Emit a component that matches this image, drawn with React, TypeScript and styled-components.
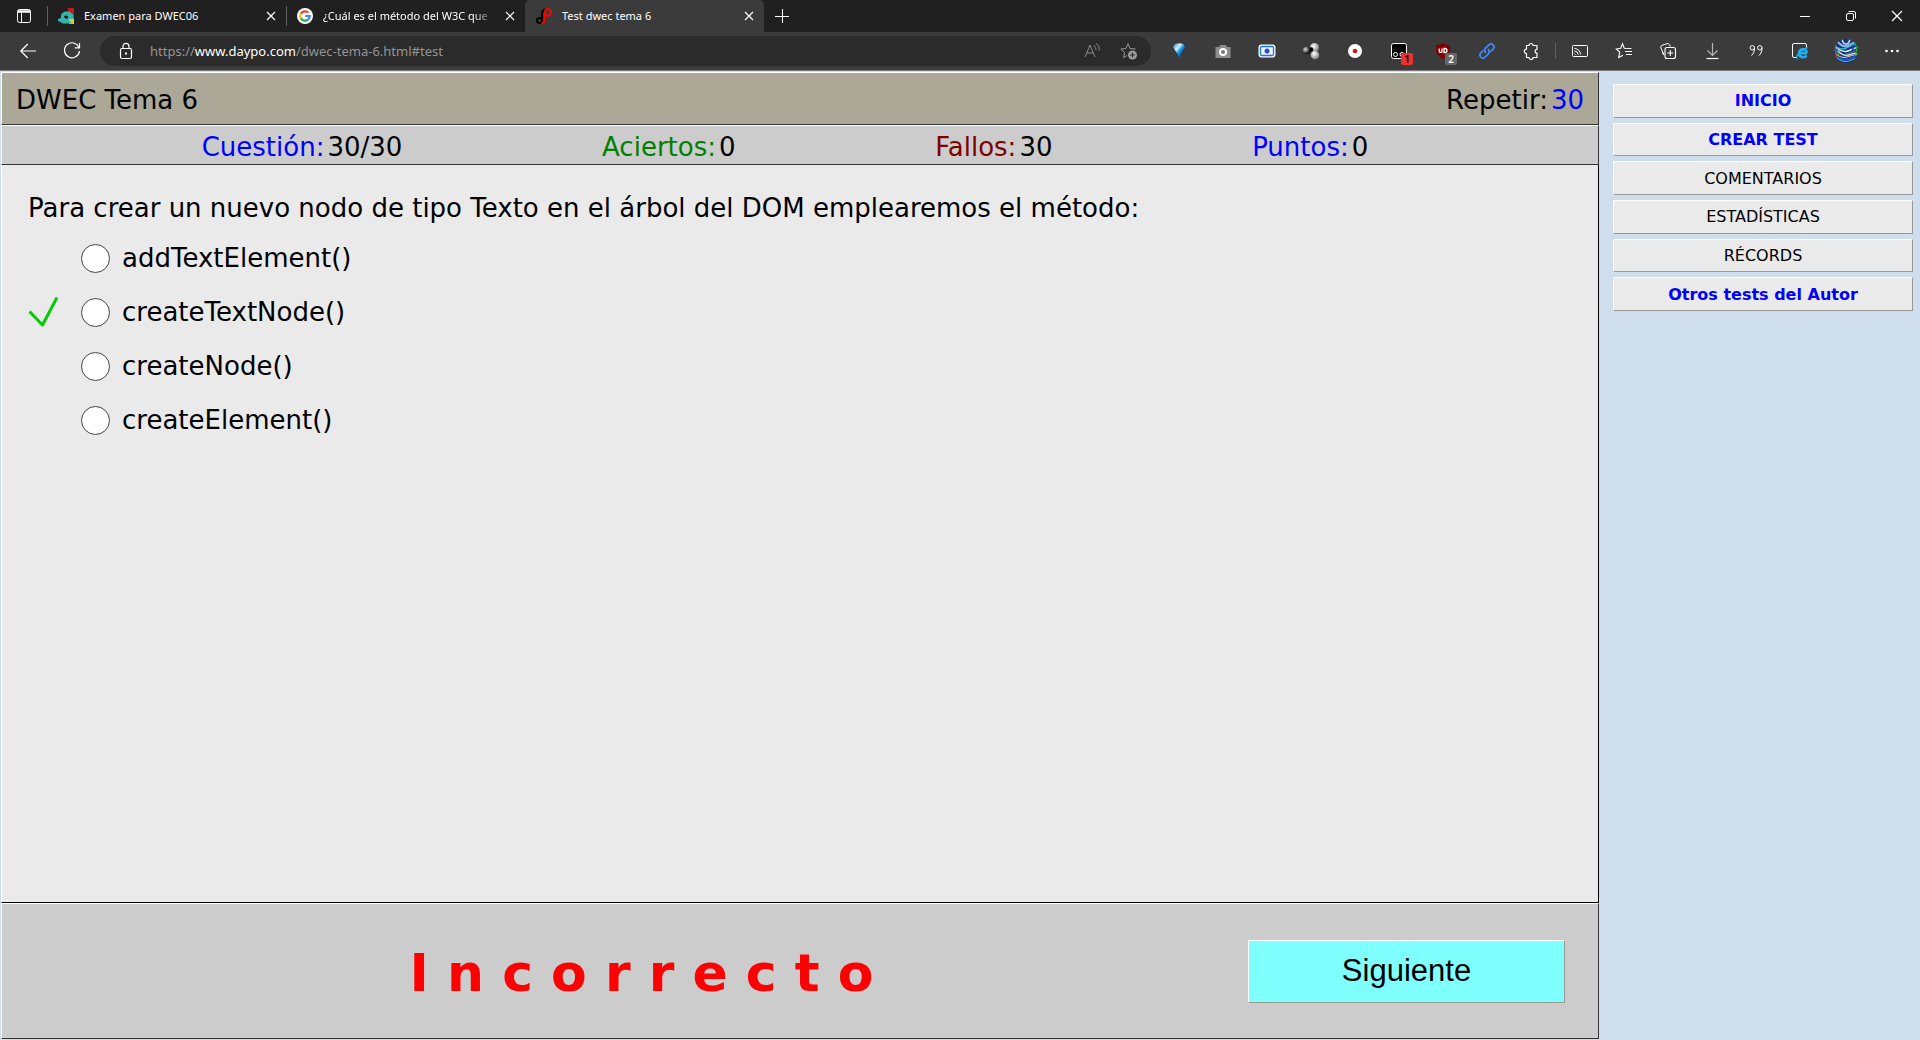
import React, { useState } from "react";
import styled, { createGlobalStyle, css } from "styled-components";

const GlobalStyle = createGlobalStyle`
  * { box-sizing: border-box; }
  body {
    margin: 0;
    background: #cfdeed;
    font-family: Verdana, "DejaVu Sans", sans-serif;
    color: #000;
  }
  button { font: inherit; color: inherit; cursor: pointer; }
`;

const uiFont = `"Segoe UI", "Noto Sans", sans-serif`;

const Shell = styled.div`
  display: flex;
  flex-direction: column;
  min-height: 100vh;
`;

/* ---------- Browser frame ---------- */

const TabStrip = styled.div`
  display: flex;
  align-items: stretch;
  height: 32px;
  background: #202020;
  color: #fff;
  font-family: ${uiFont};
  font-size: 11px;
`;

const PlainButton = styled.button<{ $width: number }>`
  display: flex;
  align-items: center;
  justify-content: center;
  flex: none;
  width: ${(p) => p.$width}px;
  padding: 0;
  border: 0;
  background: none;
  svg { display: block; overflow: visible; }
`;

const BrowserTab = styled.div<{ $active?: boolean }>`
  display: flex;
  align-items: center;
  width: 239px;
  padding-right: 7px;
  ${(p) =>
    p.$active &&
    css`
      background: #3b3b3b;
      border-radius: 5px 5px 0 0;
    `}
  &::before {
    content: "";
    width: 1px;
    height: 20px;
    margin-right: 10px;
    background: ${(p) => (p.$active ? "transparent" : "#606060")};
  }
`;

const TabTitle = styled.button<{ $fade?: boolean }>`
  flex: 1;
  min-width: 0;
  margin: 0 8px 0 10px;
  padding: 0;
  border: 0;
  background: none;
  text-align: left;
  white-space: nowrap;
  overflow: hidden;
  line-height: 18px;
  ${(p) => p.$fade && css`mask-image: linear-gradient(90deg, #000 88%, transparent);`}
`;

const Spacer = styled.div`
  flex: 1;
`;

const Toolbar = styled.div`
  display: flex;
  align-items: stretch;
  height: 39px;
  padding: 0 6px;
  background: #3b3b3b;
  border-bottom: 1px solid #77777c;
  color: #fff;
  font-family: ${uiFont};
`;

const AddressBar = styled.div`
  display: flex;
  align-items: center;
  flex: 1;
  min-width: 0;
  height: 30px;
  margin: 4px 6px;
  padding: 0 5px 0 8px;
  border-radius: 15px;
  background: #2b2b2b;
`;

const Url = styled.div`
  flex: 1;
  min-width: 0;
  margin-left: 6px;
  overflow: hidden;
  white-space: nowrap;
  outline: none;
  font-size: 13px;
  line-height: 20px;
  color: #959595;
  b { font-weight: 400; color: #fff; }
`;

const ToolbarDivider = styled.div`
  align-self: center;
  width: 1px;
  height: 16px;
  margin: 0 2px;
  background: #606060;
`;

const BadgeHost = styled.span`
  position: relative;
  display: block;
`;

const Badge = styled.span<{ $bg: string; $fg: string }>`
  position: absolute;
  left: 10px;
  top: 10px;
  width: 12px;
  height: 12px;
  border-radius: 2px;
  background: ${(p) => p.$bg};
  color: ${(p) => p.$fg};
  font-size: 10px;
  font-weight: 600;
  line-height: 12px;
  text-align: center;
`;

/* ---------- Test page ---------- */

const Page = styled.div`
  display: flex;
  flex: 1;
`;

const TestPane = styled.main`
  display: flex;
  flex-direction: column;
  flex: 1;
  min-width: 0;
  padding: 1px 0 1px 1px;
`;

const Panel = styled.section<{ $bg: string; $edge?: string }>`
  display: flex;
  border: 1px solid #fff;
  border-right-color: ${(p) => p.$edge ?? "#333"};
  border-bottom-color: ${(p) => p.$edge ?? "#333"};
  background: ${(p) => p.$bg};
  font-size: 26px;
  line-height: 30px;
`;

const TitlePanel = styled(Panel)`
  align-items: center;
  justify-content: space-between;
  height: 53px;
  padding: 2px 14px 0;
`;

const Title = styled.h1`
  margin: 0;
  font-size: inherit;
  font-weight: 400;
`;

const StatsPanel = styled(Panel)`
  align-items: center;
  justify-content: space-evenly;
  height: 40px;
  padding: 4px 30px 0 0;
`;

const Stat = styled.span`
  display: flex;
  gap: 3px;
`;

const Tone = styled.span<{ $color: string }>`
  color: ${(p) => p.$color};
`;

const QuestionPanel = styled(Panel)`
  flex: 1;
  flex-direction: column;
  border-top: 0;
  padding: 28px 26px;
`;

const Question = styled.p`
  margin: 0 0 8px;
`;

const Answer = styled.label`
  display: flex;
  align-items: center;
  height: 54px;
`;

const MarkSlot = styled.span`
  width: 53px;
  height: 30px;
  svg { display: block; }
`;

const Radio = styled.input`
  appearance: none;
  width: 29px;
  height: 29px;
  margin: 0 12px 0 0;
  border: 1px solid #444;
  border-radius: 50%;
  background: #fff;
  &:checked { box-shadow: inset 0 0 0 5px #fff; background: #0075ff; }
`;

const ResultPanel = styled(Panel)`
  align-items: center;
  height: 136px;
  padding: 0 33px;
`;

const Verdict = styled.strong`
  flex: 1;
  padding-top: 4px;
  text-align: center;
  font-size: 52px;
  line-height: 60px;
  color: #f00;
`;

const NextButton = styled.button`
  width: 317px;
  height: 63px;
  border: 1px solid #fff;
  border-right-color: #999;
  border-bottom-color: #999;
  background: #80ffff;
  font-family: Arial, "Liberation Sans", sans-serif;
  font-size: 31px;
`;

const Sidebar = styled.nav`
  flex: none;
  display: grid;
  grid-auto-rows: 1fr;
  align-self: flex-start;
  gap: 5px;
  width: 321px;
  height: 240px;
  padding: 13px 7px 0 14px;
`;

const SideLink = styled.a<{ $strong?: boolean }>`
  display: flex;
  align-items: center;
  justify-content: center;
  border: 1px solid #fff;
  border-right-color: #999;
  border-bottom-color: #999;
  padding-top: 1px;
  background: #eaeaea;
  font-size: 16px;
  line-height: 20px;
  text-decoration: none;
  font-weight: ${(p) => (p.$strong ? 700 : 400)};
  color: ${(p) => (p.$strong ? "#00f" : "#000")};
`;

/* ---------- Icons ---------- */

type IconProps = { size?: number; color?: string; children: React.ReactNode };
const Icon = ({ size = 16, color = "#fff", children }: IconProps) => (
  <svg width={size} height={size} viewBox={`0 0 ${size} ${size}`} fill="none" stroke={color} strokeWidth="1" aria-hidden="true">
    {children}
  </svg>
);

const TabsMenuIcon = () => (
  <Icon>
    <rect x="1.5" y="1.5" width="13" height="13" rx="2" />
    <path d="M2 3h12M2 4h12" strokeWidth="1.4" />
    <path d="M5.5 4v10" />
  </Icon>
);
const CloseIcon = ({ size = 8 }: { size?: number }) => (
  <Icon size={size}><path d={`M0 0L${size} ${size}M${size} 0L0 ${size}`} strokeWidth="1.2" /></Icon>
);
const PlusIcon = () => <Icon size={14}><path d="M7.5 0v14M0 7.5h14" strokeWidth="1.1" /></Icon>;
const MoodleIcon = () => (
  <Icon>
    <path d="M10 0h6v7h-4l-2-2z" fill="#c4161c" stroke="none" />
    <path d="M11 10h5v6h-5z" fill="#f5c21b" stroke="none" />
    <path d="M8 3.500h3.500L15.500 7v4H11v1.500L13 14v1.500H5L2.500 14 0 13v-2l3-1V7c1-2 3-3.500 5-3.500z" fill="#33b5ab" stroke="none" />
    <path d="M6 8.500C7 7 9 7 10 8.500v2H7z" fill="#202020" stroke="none" />
  </Icon>
);
const GoogleIcon = () => (
  <Icon>
    <circle cx="8" cy="8" r="8" fill="#fff" stroke="none" />
    <g strokeWidth="2.2">
      <path d="M11.400 4.700A4.800 4.800 0 0 0 3.900 5.600" stroke="#ea4335" />
      <path d="M3.900 5.600a4.800 4.800 0 0 0 0 4.800" stroke="#fbbc05" />
      <path d="M3.900 10.400a4.800 4.800 0 0 0 7.400 1" stroke="#34a853" />
      <path d="M11.300 11.400A4.800 4.800 0 0 0 12.800 8H8.200" stroke="#4285f4" />
    </g>
  </Icon>
);
const DaypoIcon = () => (
  <Icon>
    <circle cx="3.500" cy="12.500" r="2.600" stroke="#000" strokeWidth="2" />
    <path d="M6.200 15V5.500C6.200 3 7 2 9 1.500" stroke="#000" strokeWidth="2" />
    <path d="M5.500 15.300C8 15 8.500 13.500 8.500 11V5" stroke="#f00" strokeWidth="2" />
    <ellipse cx="11.800" cy="4.500" rx="3.200" ry="3.400" stroke="#f00" strokeWidth="2" />
  </Icon>
);
const BackIcon = () => <Icon><path d="M16 8H.8M7.800 1L.8 8l7 7" strokeWidth="1.200" /></Icon>;
const ReloadIcon = () => (
  <Icon><path d="M15 4.500A7.500 7.500 0 1 0 15.500 8M15.500 0v4.800h-4.800" strokeWidth="1.200" /></Icon>
);
const LockIcon = () => (
  <Icon>
    <rect x="2.500" y="5.500" width="11" height="10" rx="1.500" strokeWidth="1.200" />
    <path d="M5 5.500V3.300a3 3 0 0 1 6 0v2.200" strokeWidth="1.200" />
    <rect x="7" y="9.500" width="2" height="2" fill="#fff" stroke="none" />
  </Icon>
);
const ReadAloudIcon = () => (
  <Icon color="#8c8c8c">
    <path d="M1 14L6 2l5 12M3 10h6M10 2.500c1.500 1 2 2.500 1.800 4.500M12 .5c2.500 1.500 3.500 4 3 7" />
  </Icon>
);
const StarPath = "M8 .8l2.100 4.700 5.100.5-3.800 3.500 1.100 5L8 12l-4.500 2.500 1.100-5L.8 6l5.100-.5z";
const AddFavoriteIcon = () => (
  <Icon color="#9a9a9a">
    <path d={StarPath} />
    <circle cx="12.500" cy="12" r="5.500" fill="#2b2b2b" stroke="none" />
    <circle cx="12.500" cy="12" r="4.500" fill="#9a9a9a" stroke="none" />
    <path d="M12.500 9.500v5M10 12h5" stroke="#2b2b2b" />
  </Icon>
);
const GemIcon = () => (
  <Icon>
    <defs>
      <linearGradient id="gem" x1="0" y1="0" x2="1" y2="1">
        <stop offset="0" stopColor="#0b6ec0" /><stop offset=".35" stopColor="#d8f4ff" />
        <stop offset=".55" stopColor="#0c8ee8" /><stop offset="1" stopColor="#063a78" />
      </linearGradient>
    </defs>
    <path d="M4 1c3-1 6-1 8 0l2 3-4.500 7L8 15l-1.500-4L2 4z" fill="url(#gem)" stroke="none" />
  </Icon>
);
const CameraIcon = () => (
  <Icon>
    <path d="M5 2h6l1 2h3.500v11H.5V4H4z" fill="#8d8d8d" stroke="none" />
    <circle cx="8" cy="9" r="3" stroke="#fff" strokeWidth="2" fill="#777" />
  </Icon>
);
const ScreenshotIcon = () => (
  <Icon>
    <rect x="0" y="2" width="16" height="12" rx="2" fill="#eef6ff" stroke="#fff" />
    <rect x="1.500" y="3.500" width="13" height="9" rx="1.500" stroke="#1976e8" strokeWidth="1.300" />
    <circle cx="8" cy="8" r="2.500" fill="#3348c8" stroke="none" />
  </Icon>
);
const MoleculeIcon = () => (
  <Icon>
    <defs>
      <radialGradient id="ballA" cx=".35" cy=".35" r=".6"><stop offset="0" stopColor="#ddd" /><stop offset="1" stopColor="#111" /></radialGradient>
      <radialGradient id="ballB" cx=".4" cy=".35" r=".7"><stop offset="0" stopColor="#fff" /><stop offset="1" stopColor="#777" /></radialGradient>
    </defs>
    <g stroke="none">
      <circle cx="11.500" cy="4.500" r="4.500" fill="url(#ballB)" />
      <circle cx="12" cy="12" r="4.300" fill="url(#ballB)" />
      <circle cx="8" cy="6.500" r="2.200" fill="#000" />
      <circle cx="3.500" cy="7.500" r="3.800" fill="url(#ballA)" />
    </g>
  </Icon>
);
const RecordIcon = () => (
  <Icon><circle cx="8" cy="8" r="7" fill="#fff" stroke="none" /><circle cx="8" cy="8" r="2.300" fill="#e01010" stroke="none" /></Icon>
);
const MonkeyIcon = () => (
  <Icon>
    <rect x=".5" y=".5" width="15" height="15" rx="2" fill="#000" />
    <circle cx="4.500" cy="11.500" r="2" /><circle cx="11" cy="11.500" r="2" />
  </Icon>
);
const ShieldIcon = () => (
  <Icon>
    <path d="M8 0c2 1.500 4.500 2 7 2 0 6 .5 10-7 14C.5 12 1 8 1 2c2.500 0 5-.5 7-2z" fill="#800000" stroke="none" />
    <path d="M4.200 5.500v2.700c0 1.600 2.800 1.600 2.800 0V5.500" strokeWidth="1.300" />
    <path d="M9 5.500v4h1a2 2 0 0 0 0-4z" strokeWidth="1.300" />
  </Icon>
);
const LinkIcon = () => (
  <Icon color="#4285f4">
    <g strokeWidth="1.800" strokeLinecap="round">
      <path d="M6.600 9.400a3 3 0 0 1 0-4.200l3.300-3.300a2.970 2.970 0 0 1 4.200 4.200l-2 2" />
      <path d="M9.400 6.600a3 3 0 0 1 0 4.200l-3.300 3.300a2.970 2.970 0 0 1-4.200-4.200l2-2" />
    </g>
  </Icon>
);
const PuzzleIcon = () => (
  <Icon>
    <path d="M3.500 2.500H6a2 2 0 0 1 4 0h4v3.800a1.900 1.900 0 0 0 0 3.800v4.400h-4a2 2 0 0 1-4 0H3.500V10.500a2.200 2.200 0 1 1 0-4.400z" strokeWidth="1.200" strokeLinejoin="round" />
  </Icon>
);
const CastIcon = () => (
  <Icon>
    <rect x=".5" y="2.500" width="15" height="11" rx="1" />
    <path d="M2.500 5.500a6 6 0 0 1 6 6M2.500 8a3.500 3.500 0 0 1 3.500 3.500M2.500 10.500l1 1" />
  </Icon>
);
const FavoritesIcon = () => (
  <Icon>
    <path d="M10.500 5.500L8.300 5.300 6.500.8 4.700 5.300.3 6l3.400 3.200-1 5.300 4.300-2.200" strokeWidth="1.100" />
    <path d="M10.500 5.500h5M9 8.500h7M10 11.500h6" strokeWidth="1.100" />
  </Icon>
);
const CollectionsIcon = () => (
  <Icon>
    <path d="M4 12L1 5C.5 3.500.8 2.800 2 2.300L7 .7c1.300-.4 2 0 2.500 1.300L10.500 3.500" />
    <path d="M4 12C2.500 11 2.500 10 2.500 8" />
    <rect x="5" y="4.500" width="10.500" height="11" rx="2" fill="#3b3b3b" strokeWidth="1.100" />
    <path d="M10.300 7v6M7.300 10h6" strokeWidth="1.100" />
  </Icon>
);
const DownloadIcon = () => (
  <Icon><path d="M8.500 0v12M3.500 7.500l5 5 5-5" stroke="#b5b5b5" strokeWidth="1.200" /><path d="M2.500 15.500h12" strokeWidth="1.200" /></Icon>
);
const QuotesIcon = () => (
  <Icon>
    <path d="M6.500 4.500c0 4-1 6-3 8M14 4.500c0 4-1 6-3 8" />
    <circle cx="4.300" cy="4.800" r="2.200" /><circle cx="11.800" cy="4.800" r="2.200" />
  </Icon>
);
const IeModeIcon = () => (
  <Icon>
    <path d="M4 14.500H2a1.500 1.500 0 0 1-1.500-1.500V2A1.500 1.500 0 0 1 2 .5h11A1.500 1.500 0 0 1 14.500 2v2" />
    <path d="M15 10.200H7.500M14.500 12.300c-1.500 3-7.500 2.500-7.500-2 0-5.300 8-5.300 7.700-.3" stroke="#1fb0ee" strokeWidth="2.600" />
    <path d="M5.500 15.500C3 16 6 8 15.500 4.500" stroke="#1fb0ee" strokeWidth="1.400" />
  </Icon>
);
const AvatarIcon = () => (
  <Icon size={24}>
    <defs><clipPath id="face"><circle cx="12" cy="12" r="12" /></clipPath></defs>
    <g clipPath="url(#face)">
      <rect width="24" height="24" fill="#14307e" stroke="none" />
      <path d="M0 6Q6 12 12 9T24 4" stroke="#37b8c8" strokeWidth="1.500" />
      <path d="M3 2Q8 8 12 7T22 2" stroke="#7fbce0" strokeWidth="2" />
      <path d="M8 0Q9 5 12 5T16 0" stroke="#c8dcf0" strokeWidth="1.500" />
      <path d="M1 8Q9 14 14 12T24 8" stroke="#dfe8e0" strokeWidth="1.500" />
      <path d="M0 11Q8 17 13 15T24 11" stroke="#1f9a5c" />
      <path d="M4 12Q10 18 15 16T23 14" stroke="#d8c8e8" strokeWidth="1.500" />
      <path d="M1 14Q7 20 13 18T24 15" stroke="#e8d860" />
      <path d="M1 17Q8 22 14 20T23 17" stroke="#2448e0" strokeWidth="2" />
      <path d="M3 19Q9 24 15 22T21 19" stroke="#42d28a" />
      <path d="M2 5Q0 12 3 18" stroke="#d23c3c" strokeWidth="1.200" />
      <path d="M4 8Q2 12 5 17" stroke="#28c040" />
      <path d="M21 4Q24 10 21.500 17" stroke="#22a040" strokeWidth="1.300" />
      <path d="M19 6Q20 9 18 12" stroke="#1838c8" strokeWidth="1.500" />
    </g>
  </Icon>
);
const MoreIcon = () => (
  <Icon><g fill="#fff" stroke="none"><circle cx="2.500" cy="8" r="1.300" /><circle cx="8" cy="8" r="1.300" /><circle cx="13.500" cy="8" r="1.300" /></g></Icon>
);
const MinimizeIcon = () => <Icon size={10}><path d="M0 5.500h10" /></Icon>;
const RestoreIcon = () => (
  <Icon size={10}>
    <rect x=".5" y="2.500" width="7" height="7" rx="1.500" />
    <path d="M2.500.5H8A1.500 1.500 0 0 1 9.500 2v5.500" />
  </Icon>
);
const CheckMark = () => (
  <svg width="30" height="30" viewBox="0 0 30 30" fill="none" stroke="#0c0" strokeWidth="3" aria-hidden="true">
    <path d="M1.500 14.500L14.500 28 29 .5" strokeLinejoin="round" />
  </svg>
);

/* ---------- Data ---------- */

const tabs = [
  { title: "Examen para DWEC06", icon: <MoodleIcon /> },
  { title: "¿Cuál es el método del W3C que", icon: <GoogleIcon />, fade: true },
  { title: "Test dwec tema 6", icon: <DaypoIcon />, active: true },
];

const extensions = [
  { name: "Gema", icon: <GemIcon /> },
  { name: "Cámara", icon: <CameraIcon /> },
  { name: "Captura", icon: <ScreenshotIcon /> },
  { name: "Moléculas", icon: <MoleculeIcon /> },
  { name: "Grabar", icon: <RecordIcon /> },
  { name: "Scripts", icon: <BadgeHost><MonkeyIcon /><Badge $bg="#ee3131" $fg="#000">1</Badge></BadgeHost> },
  { name: "Bloqueador", icon: <BadgeHost><ShieldIcon /><Badge $bg="#666" $fg="#fff">2</Badge></BadgeHost> },
  { name: "Enlace", icon: <LinkIcon /> },
  { name: "Extensiones", icon: <PuzzleIcon /> },
];

const tools = [
  { name: "Transmitir", icon: <CastIcon /> },
  { name: "Favoritos", icon: <FavoritesIcon /> },
  { name: "Colecciones", icon: <CollectionsIcon /> },
  { name: "Descargas", icon: <DownloadIcon /> },
  { name: "Citas", icon: <QuotesIcon /> },
  { name: "Modo Internet Explorer", icon: <IeModeIcon /> },
];

const stats = [
  { label: "Cuestión:", value: "30/30", color: "#00f" },
  { label: "Aciertos:", value: "0", color: "#008000" },
  { label: "Fallos:", value: "30", color: "#800000" },
  { label: "Puntos:", value: "0", color: "#00f" },
];

const answers = [
  { text: "addTextElement()" },
  { text: "createTextNode()", correct: true },
  { text: "createNode()" },
  { text: "createElement()" },
];

const links = [
  { text: "INICIO", strong: true },
  { text: "CREAR TEST", strong: true },
  { text: "COMENTARIOS" },
  { text: "ESTADÍSTICAS" },
  { text: "RÉCORDS" },
  { text: "Otros tests del Autor", strong: true },
];

export default function App() {
  const [choice, setChoice] = useState<string | null>(null);

  return (
    <Shell>
      <GlobalStyle />
      <header>
        <TabStrip>
          <PlainButton $width={47} aria-label="Menú de pestañas"><TabsMenuIcon /></PlainButton>
          {tabs.map((t) => (
            <BrowserTab key={t.title} $active={t.active}>
              {t.icon}
              <TabTitle $fade={t.fade}>{t.title}</TabTitle>
              <PlainButton $width={16} aria-label="Cerrar pestaña"><CloseIcon /></PlainButton>
            </BrowserTab>
          ))}
          <PlainButton $width={36} aria-label="Nueva pestaña"><PlusIcon /></PlainButton>
          <Spacer />
          <PlainButton $width={46} aria-label="Minimizar"><MinimizeIcon /></PlainButton>
          <PlainButton $width={46} aria-label="Restaurar"><RestoreIcon /></PlainButton>
          <PlainButton $width={46} aria-label="Cerrar"><CloseIcon size={10} /></PlainButton>
        </TabStrip>
        <Toolbar>
          <PlainButton $width={44} aria-label="Atrás"><BackIcon /></PlainButton>
          <PlainButton $width={44} aria-label="Recargar"><ReloadIcon /></PlainButton>
          <AddressBar>
            <PlainButton $width={36} aria-label="Información del sitio"><LockIcon /></PlainButton>
            <Url role="textbox" aria-label="Dirección" contentEditable suppressContentEditableWarning spellCheck={false}>
              https://<b>www.daypo.com</b>/dwec-tema-6.html#test
            </Url>
            <PlainButton $width={36} aria-label="Leer en voz alta"><ReadAloudIcon /></PlainButton>
            <PlainButton $width={36} aria-label="Agregar a favoritos"><AddFavoriteIcon /></PlainButton>
          </AddressBar>
          {extensions.map((e) => (
            <PlainButton key={e.name} $width={44} aria-label={e.name}>{e.icon}</PlainButton>
          ))}
          <ToolbarDivider />
          {tools.map((t) => (
            <PlainButton key={t.name} $width={44} aria-label={t.name}>{t.icon}</PlainButton>
          ))}
          <PlainButton $width={48} aria-label="Perfil"><AvatarIcon /></PlainButton>
          <PlainButton $width={44} aria-label="Más"><MoreIcon /></PlainButton>
        </Toolbar>
      </header>

      <Page>
        <TestPane>
          <TitlePanel $bg="#aba898">
            <Title>DWEC Tema 6</Title>
            <Stat>
              <span>Repetir:</span>
              <Tone $color="#00f">30</Tone>
            </Stat>
          </TitlePanel>
          <StatsPanel $bg="#ccc">
            {stats.map((s) => (
              <Stat key={s.label}>
                <Tone $color={s.color}>{s.label}</Tone>
                <span>{s.value}</span>
              </Stat>
            ))}
          </StatsPanel>
          <QuestionPanel $bg="#eaeaea" $edge="#000">
            <Question>Para crear un nuevo nodo de tipo Texto en el árbol del DOM emplearemos el método:</Question>
            {answers.map((a) => (
              <Answer key={a.text}>
                <MarkSlot>{a.correct && <CheckMark />}</MarkSlot>
                <Radio type="radio" name="answer" checked={choice === a.text} onChange={() => setChoice(a.text)} />
                {a.text}
              </Answer>
            ))}
          </QuestionPanel>
          <ResultPanel $bg="#ccc">
            <Verdict>I n c o r r e c t o</Verdict>
            <NextButton type="button">Siguiente</NextButton>
          </ResultPanel>
        </TestPane>
        <Sidebar>
          {links.map((l) => (
            <SideLink key={l.text} href="#test" $strong={l.strong}>{l.text}</SideLink>
          ))}
        </Sidebar>
      </Page>
    </Shell>
  );
}
